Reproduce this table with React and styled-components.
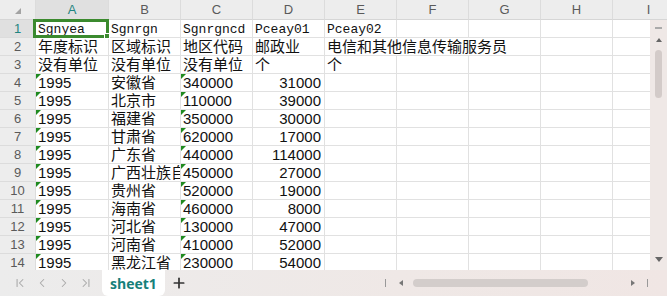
import React from 'react';
import styled, { createGlobalStyle, css } from 'styled-components';
import { ChevronFirst, ChevronLeft, ChevronRight, ChevronLast, Plus } from 'lucide-react';

const GlobalStyle = createGlobalStyle`
  html, body { margin: 0; padding: 0; background: #fff; }
  body { font-family: "Liberation Sans", "Noto Sans CJK SC", sans-serif; }
`;

const COLS = ['A', 'B', 'C', 'D', 'E', 'F', 'G', 'H', 'I'];
const TEMPLATE = '36px 73px repeat(8, 72px)';

const provinces = [
  ['安徽省', '340000', '31000'],
  ['北京市', '110000', '39000'],
  ['福建省', '350000', '30000'],
  ['甘肃省', '620000', '17000'],
  ['广东省', '440000', '114000'],
  ['广西壮族自治区', '450000', '27000'],
  ['贵州省', '520000', '19000'],
  ['海南省', '460000', '8000'],
  ['河北省', '130000', '47000'],
  ['河南省', '410000', '52000'],
  ['黑龙江省', '230000', '54000'],
];

const rows = [
  [{ v: 'Sgnyea', mono: true }, { v: 'Sgnrgn', mono: true }, { v: 'Sgnrgncd', mono: true }, { v: 'Pceay01', mono: true }, { v: 'Pceay02', mono: true }],
  [{ v: '年度标识' }, { v: '区域标识' }, { v: '地区代码' }, { v: '邮政业' }, { v: '电信和其他信息传输服务员', span: 3 }],
  [{ v: '没有单位' }, { v: '没有单位' }, { v: '没有单位' }, { v: '个' }, { v: '个' }],
  ...provinces.map(([name, code, n]) => [
    { v: '1995', flag: true },
    { v: name },
    { v: code, flag: true },
    { v: n, right: true },
  ]),
];

const Frame = styled.div`
  width: 667px;
  height: 296px;
  display: flex;
  flex-direction: column;
  overflow: hidden;
  background: #fff;
`;

const HeaderRow = styled.div`
  display: grid;
  grid-template-columns: ${TEMPLATE};
  height: 20px;
  flex-shrink: 0;
  background: #ededed;
  overflow: hidden;
`;

const HeadCell = styled.div`
  display: flex;
  align-items: center;
  justify-content: center;
  border-right: 1px solid #dcdcdc;
  border-bottom: 1px solid #d6d6d6;
  font-size: 13px;
  color: ${(p) => (p.$active ? '#1f8581' : '#5a5a5a')};
  background: ${(p) => (p.$active ? '#e0e0e0' : '#ededed')};
`;

const Corner = styled(HeadCell)`
  justify-content: flex-end;
  align-items: flex-end;
  padding: 0 14px 5px 0;
  box-sizing: border-box;

  &::after {
    content: '';
    border-left: 6px solid transparent;
    border-bottom: 6px solid #a3a3a3;
  }
`;

const Body = styled.div`
  flex: 1;
  display: flex;
  min-height: 0;
  position: relative;
`;

const Sheet = styled.div`
  flex: 1;
  overflow: hidden;
`;

const Row = styled.div`
  display: grid;
  grid-template-columns: ${TEMPLATE};
  height: 18px;
`;

const RowHead = styled(HeadCell)`
  border-bottom: 1px solid #dcdcdc;
  justify-content: center;
`;

const Cell = styled.div`
  position: relative;
  box-sizing: border-box;
  border-right: 1px solid #e1e1e1;
  border-bottom: 1px solid #e1e1e1;
  padding: 0 3px 0 2px;
  font-size: 15px;
  line-height: 18px;
  color: #111;
  white-space: nowrap;
  overflow: hidden;
  text-align: ${(p) => (p.$right ? 'right' : 'left')};
  ${(p) => p.$span && css`grid-column: span ${p.$span};`}
  ${(p) => p.$mono && css`
    font-family: "Liberation Mono", "Noto Sans CJK SC", monospace;
    font-size: 13px;
    padding-top: 2px;
    line-height: 16px;
  `}
  ${(p) => p.$flag && css`
    &::before {
      content: '';
      position: absolute;
      left: 0;
      top: 0;
      border-top: 5px solid #1f8a1f;
      border-right: 5px solid transparent;
    }
  `}
`;

/* active-cell frame drawn over A1 */
const Selection = styled.div`
  position: absolute;
  left: 33px;
  top: -1px;
  width: 76px;
  height: 19px;
  box-sizing: border-box;
  border: 3px solid #3b8a2e;
  z-index: 5;
  pointer-events: none;

  &::after {
    content: '';
    position: absolute;
    right: -4px;
    bottom: -4px;
    width: 4px;
    height: 4px;
    background: #3b8a2e;
    border: 1px solid #fff;
  }
`;

const VScroll = styled.div`
  width: 17px;
  flex-shrink: 0;
  background: #efe8e6;
  display: flex;
  flex-direction: column;
  align-items: center;
  padding: 7px 0 8px;
  box-sizing: border-box;
`;

const Dash = styled.div`
  width: 7px;
  height: 2px;
  background: #aaa;
  margin-bottom: 9px;
`;

const Tri = styled.div`
  width: 0;
  height: 0;
  ${(p) => p.$dir === 'up' && css`
    border-left: 3px solid transparent;
    border-right: 3px solid transparent;
    border-bottom: 4px solid #666;
  `}
  ${(p) => p.$dir === 'down' && css`
    border-left: 4px solid transparent;
    border-right: 4px solid transparent;
    border-top: 5px solid #666;
  `}
  ${(p) => p.$dir === 'left' && css`
    border-top: 3px solid transparent;
    border-bottom: 3px solid transparent;
    border-right: 4px solid #777;
  `}
  ${(p) => p.$dir === 'right' && css`
    border-top: 3px solid transparent;
    border-bottom: 3px solid transparent;
    border-left: 4px solid #777;
  `}
`;

const VThumb = styled.div`
  width: 7px;
  height: 48px;
  border-radius: 4px;
  background: #d3cbc9;
  margin-top: 8px;
`;

const Spacer = styled.div`
  flex: 1;
`;

const Gap = styled.div`
  width: ${(p) => p.$w}px;
  flex-shrink: 0;
`;

const TabBar = styled.div`
  height: 26px;
  flex-shrink: 0;
  display: flex;
  align-items: center;
  background: linear-gradient(90deg, #ececec 0%, #efe8e6 60%, #f0e6e4 100%);
`;

const NavGroup = styled.div`
  display: flex;
  align-items: center;
  gap: 8px;
  padding-left: 13px;
  width: 89px;
  color: #a8a8a8;
`;

const SheetTab = styled.div`
  align-self: stretch;
  width: 63px;
  background: #fff;
  border-radius: 0 0 6px 6px;
  display: flex;
  align-items: center;
  justify-content: center;
  font-weight: bold;
  font-size: 14px;
  color: #15807a;
  font-family: "Open Sans", "Liberation Sans", sans-serif;
`;

const AddBtn = styled.div`
  margin-left: 6px;
  display: flex;
  color: #333;
`;

const HScroll = styled.div`
  display: flex;
  align-items: center;
  margin-left: auto;
  padding-right: 19px;
`;

const Bar = styled.div`
  width: 1px;
  height: 8px;
  background: #999;
`;

const HThumb = styled.div`
  width: 175px;
  height: 8px;
  border-radius: 4px;
  background: #d3cdcb;
  margin: 0 43px 0 10px;
`;

export default function App() {
  return (
    <Frame>
      <GlobalStyle />
      <HeaderRow>
        <Corner />
        {COLS.map((c, i) => (
          <HeadCell key={c} $active={i === 0}>{c}</HeadCell>
        ))}
      </HeaderRow>
      <Body>
        <Sheet>
          {rows.map((cells, r) => {
            const used = cells.reduce((n, c) => n + (c.span || 1), 0);
            const empty = Array.from({ length: COLS.length - used });
            return (
              <Row key={r}>
                <RowHead $active={r === 0}>{r + 1}</RowHead>
                {cells.map((c, i) => (
                  <Cell key={i} $mono={c.mono} $flag={c.flag} $right={c.right} $span={c.span}>
                    {c.v}
                  </Cell>
                ))}
                {empty.map((_, i) => <Cell key={'e' + i} />)}
              </Row>
            );
          })}
        </Sheet>
        <Selection />
        <VScroll>
          <Dash />
          <Tri $dir="up" />
          <VThumb />
          <Spacer />
          <Tri $dir="down" />
        </VScroll>
      </Body>
      <TabBar>
        <NavGroup>
          <ChevronFirst size={14} strokeWidth={1.8} />
          <ChevronLeft size={14} strokeWidth={1.8} />
          <ChevronRight size={14} strokeWidth={1.8} />
          <ChevronLast size={14} strokeWidth={1.8} />
        </NavGroup>
        <SheetTab>sheet1</SheetTab>
        <AddBtn><Plus size={16} strokeWidth={2.6} /></AddBtn>
        <HScroll>
          <Bar />
          <Gap $w={13} />
          <Tri $dir="left" />
          <HThumb />
          <Tri $dir="right" />
          <Gap $w={12} />
          <Bar />
        </HScroll>
      </TabBar>
    </Frame>
  );
}
